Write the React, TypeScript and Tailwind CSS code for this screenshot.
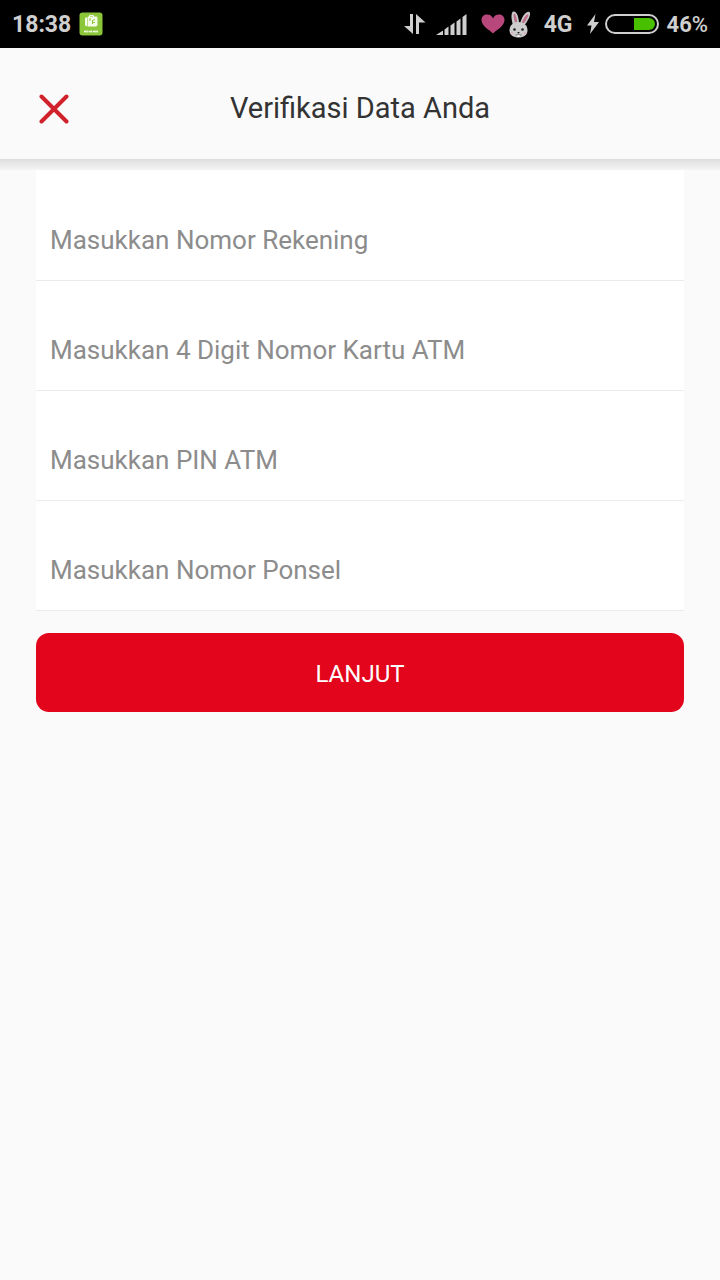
import React, { useState } from "react";

interface Field {
  id: string;
  label: string;
  type: "text" | "password" | "tel";
}

const fields: Field[] = [
  { id: "rekening", label: "Masukkan Nomor Rekening", type: "text" },
  { id: "kartu", label: "Masukkan 4 Digit Nomor Kartu ATM", type: "text" },
  { id: "pin", label: "Masukkan PIN ATM", type: "password" },
  { id: "ponsel", label: "Masukkan Nomor Ponsel", type: "tel" },
];

function AppBadge() {
  return (
    <svg viewBox="0 0 24 24" className="size-6">
      <rect x="0.5" y="0.5" width="23" height="23" rx="3" fill="#8cc63a" />
      <path d="M6 6l2.500-1v9.500l-2.500-1zM9 4.500h8.500l1 1v8l-1.500 1H9z" fill="#f4fbe8" />
      <path d="M10.500 5V3.500h4V5" fill="none" stroke="#f4fbe8" />
      <path d="M11 6v3M13.500 12V8.500l2.500-1M14 10.500h2" stroke="#8cc63a" fill="none" />
      <path
        d="M5 19.500h2M8 18.500v2M9.500 19.500h2M12.500 18.500v2M14 19.500h2M17 18.500v2M18 19.500h1"
        stroke="#f4fbe8"
        strokeWidth="1.500"
        fill="none"
      />
    </svg>
  );
}

function DataArrows() {
  return (
    <svg viewBox="0 0 22 20" className="h-5 w-[22px]" fill="#cfcfcf">
      <path d="M6 0h3v20L0 12h6z" />
      <path d="M12 0l9.500 8.500H15V20h-3z" />
    </svg>
  );
}

function Signal() {
  return (
    <svg viewBox="0 0 31 21" className="h-[21px] w-[31px]" fill="#cfcfcf">
      <path d="M0 21l7-4.500v4.500z" />
      <path d="M8.500 15.500l4-3v8.500h-4z" />
      <path d="M14.500 11.500l4-3V21h-4z" />
      <path d="M20.500 7.500l4-3V21h-4z" />
      <path d="M26.500 3L30.500 0v21h-4z" />
    </svg>
  );
}

function Heart() {
  return (
    <svg viewBox="0 0 24 20" className="h-5 w-6">
      <path
        d="M12 19.500C9 16 0.500 12.500 0.500 6C0.500 2.500 3 0.500 6 0.500c3 0 5 1.500 6 4C13 2 15 0.500 18 0.500c3 0 5.500 2 5.500 5.500C23.500 12.500 15 16 12 19.500z"
        fill="#b8487c"
      />
    </svg>
  );
}

function Rabbit() {
  return (
    <svg viewBox="0 0 23 28" className="h-7 w-[23px]">
      <path d="M4 15C2 9 2 3 4 1.500C7.500 0.500 10 7 10 14z" fill="#c9c9c9" />
      <path d="M6 12.500C4.500 8 4.300 4.500 5 3.500C6.800 4 8 8.500 8 12.500z" fill="#c0708a" />
      <path d="M11 14.500C12 7 17.500 0.500 20.500 2C22.500 4 19 11.500 14.500 16z" fill="#c9c9c9" />
      <path d="M12.800 13C14 8.500 17.500 4 19.300 4C19.800 6 17 11 14.300 13.500z" fill="#c0708a" />
      <path
        d="M9.500 12c5.500 0 9 3.500 9 8.500c0 4.500-4 7-9 7s-9-2.500-9-7c0-5 3.500-8.500 9-8.500z"
        fill="#cdcdcd"
      />
      <circle cx="5.500" cy="19.500" r="1.300" fill="#222" />
      <circle cx="13.500" cy="19.500" r="1.300" fill="#222" />
      <path d="M8 22h3l-1.500 1.500z" fill="#222" />
      <path d="M6.500 25c1.500 0 3-.3 3-1.500c0 1.200 1.500 1.500 3 1.500" stroke="#555" strokeWidth="0.800" fill="none" />
      <path d="M8.500 25h2v2h-2z" fill="#f2f2f2" />
      <circle cx="3" cy="23" r="1.300" fill="#d8b4bd" />
      <circle cx="16" cy="23" r="1.300" fill="#d8b4bd" />
    </svg>
  );
}

function Battery() {
  return (
    <svg viewBox="0 0 54 20" className="h-5 w-[54px]">
      <rect x="1" y="1" width="52" height="18" rx="9" fill="none" stroke="#cfcfcf" strokeWidth="2" />
      <path d="M29 4h15a6 6 0 0 1 0 12H29z" fill="#48c000" />
    </svg>
  );
}

function StatusBar() {
  return (
    <div className="flex h-12 items-center justify-between bg-black px-3 text-[23px] leading-8 font-bold text-[#cfcfcf]">
      <div className="flex items-center gap-2">
        <span className="pt-0.5">18:38</span>
        <AppBadge />
      </div>
      <div className="flex items-center">
        <DataArrows />
        <div className="ml-2.5">
          <Signal />
        </div>
        <div className="ml-3.5 flex items-center gap-1">
          <Heart />
          <Rabbit />
        </div>
        <span className="ml-3 pt-0.5">4G</span>
        <svg viewBox="0 0 12 20" className="ml-3.5 h-5 w-3" fill="#cfcfcf">
          <path d="M8.500 0L0 11.500h4.500L3 20L12 8H7z" />
        </svg>
        <div className="ml-1.5">
          <Battery />
        </div>
        <span className="ml-2 pt-0.5 text-[22px] leading-8">
          46<span className="font-medium">%</span>
        </span>
      </div>
    </div>
  );
}

export default function App() {
  const [values, setValues] = useState<Record<string, string>>({});

  return (
    <div className="min-h-screen bg-[#fafafa] font-['Roboto',sans-serif]">
      <StatusBar />

      <header className="grid h-[111px] grid-cols-[72px_1fr_72px] items-center px-[18px] pt-2.5">
        <button type="button" aria-label="Tutup" className="flex size-[72px] items-center justify-center">
          <svg viewBox="0 0 30 30" className="size-[30px]" fill="none" stroke="#d0222b" strokeWidth="4" strokeLinecap="round">
            <path d="M2.500 2.500l25 25M27.500 2.500l-25 25" />
          </svg>
        </button>
        <h1 className="text-center text-[29px] text-[#333333]">Verifikasi Data Anda</h1>
      </header>
      <div className="h-[11px] bg-linear-to-b from-[#dedede] to-[#f4f4f4]" />

      <form className="px-9" onSubmit={(e) => e.preventDefault()}>
        <div className="bg-white pt-px">
          {fields.map((field) => (
            <input
              key={field.id}
              id={field.id}
              type={field.type}
              aria-label={field.label}
              placeholder={field.label}
              value={values[field.id] ?? ""}
              onChange={(e) => setValues({ ...values, [field.id]: e.target.value })}
              className="block h-[110px] w-full border-b border-[#ebebeb] px-3.5 pt-7 text-[26px] text-[#333333] outline-none placeholder:text-[#8c8c8c]"
            />
          ))}
        </div>
        <button
          type="submit"
          className="mt-[22px] flex h-[79px] w-full items-center justify-center rounded-[13px] bg-[#e3051b] pt-0.5 text-2xl text-white"
        >
          LANJUT
        </button>
      </form>
    </div>
  );
}
